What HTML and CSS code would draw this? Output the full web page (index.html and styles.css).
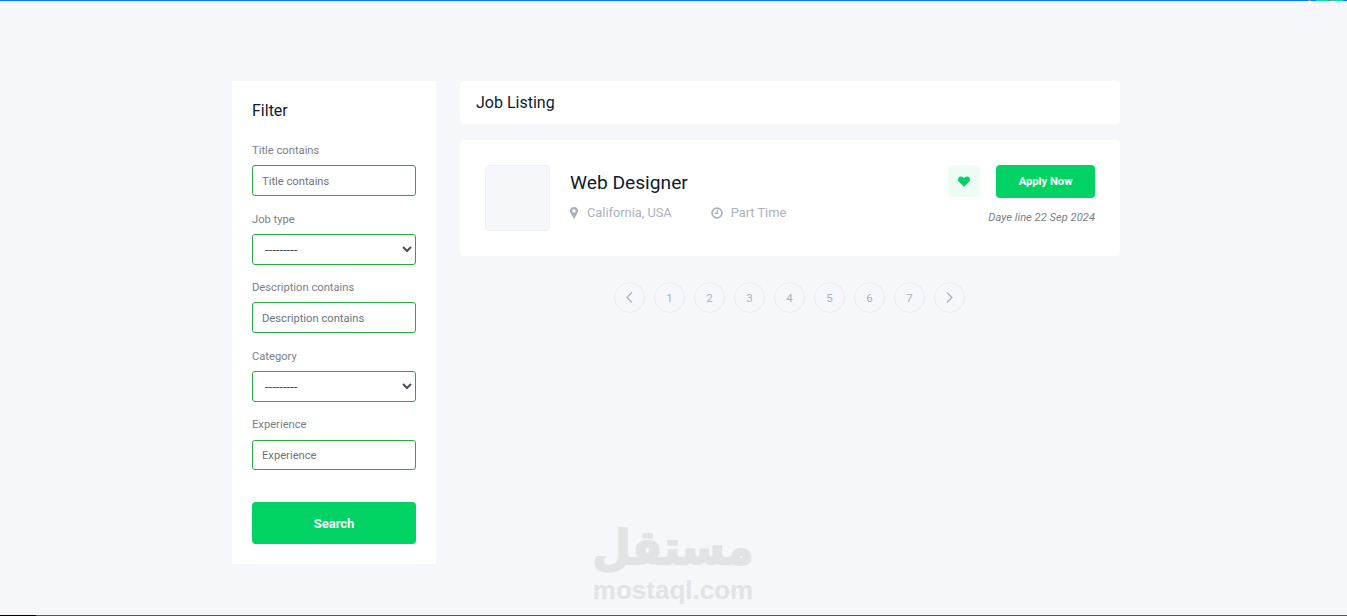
FILE: index.html
```html
<!DOCTYPE html>
<html lang="en">
<head>
<meta charset="utf-8">
<title>Job Listing</title>
<link rel="stylesheet" href="styles.css">
</head>
<body>
<div class="page">
  <div class="topbar"><span class="seg-fill"></span><span class="seg-grey s1"></span><span class="seg-blue s2"></span><span class="seg-teal s3"></span><span class="seg-blue s4"></span><span class="seg-grey s5"></span><span class="seg-teal s6"></span><span class="seg-blue s7"></span></div>
  <main class="layout">
    <aside class="filter">
      <h2 class="filter-title">Filter</h2>
      <form class="filter-form">
        <div class="field">
          <label class="field-label">Title contains</label>
          <input class="control" type="text" placeholder="Title contains">
        </div>
        <div class="field">
          <label class="field-label">Job type</label>
          <select class="control control-select"><option>---------</option></select>
        </div>
        <div class="field">
          <label class="field-label">Description contains</label>
          <input class="control" type="text" placeholder="Description contains">
        </div>
        <div class="field">
          <label class="field-label">Category</label>
          <select class="control control-select"><option>---------</option></select>
        </div>
        <div class="field">
          <label class="field-label">Experience</label>
          <input class="control" type="text" placeholder="Experience">
        </div>
        <button class="search-btn" type="button">Search</button>
      </form>
    </aside>
    <section class="content">
      <header class="list-head">Job Listing</header>
      <article class="job">
        <div class="job-logo"></div>
        <div class="job-info">
          <h3 class="job-title">Web Designer</h3>
          <div class="job-meta">
            <span class="meta-item meta-place">
              <svg class="meta-icon" width="8" height="12" viewBox="0 0 8 12"><path fill-rule="evenodd" fill="#a9b1bd" d="M4 0a4 4 0 0 1 4 4c0 1.100-.3 1.700-.7 2.500L4 12 .7 6.500C.3 5.700 0 5.100 0 4a4 4 0 0 1 4-4zm0 2.300a1.700 1.700 0 1 0 0 3.400 1.700 1.700 0 0 0 0-3.400z"/></svg>
              California, USA
            </span>
            <span class="meta-item">
              <svg class="meta-icon" width="12" height="12" viewBox="0 0 12 12"><circle cx="6" cy="6" r="4.900" fill="none" stroke="#a9b1bd" stroke-width="1.800"/><path d="M6.300 3v3.300H3.600" fill="none" stroke="#a9b1bd" stroke-width="1.300"/></svg>
              Part Time
            </span>
          </div>
        </div>
        <div class="job-side">
          <div class="job-actions">
            <button class="fav-btn" type="button" aria-label="Favourite">
              <svg width="12" height="11" viewBox="0 0 12 11"><path fill="#00d363" d="M6 10.800.9 5.800C-.3 4.600-.3 2.500.9 1.300c1.200-1.200 3-1.200 4.200 0l.9.900.9-.9c1.200-1.200 3-1.200 4.200 0 1.200 1.200 1.200 3.300 0 4.500z"/></svg>
            </button>
            <a class="apply-btn">Apply Now</a>
          </div>
          <p class="deadline">Daye line 22 Sep 2024</p>
        </div>
      </article>
      <nav class="pager">
        <a class="page-link"><svg width="7" height="11" viewBox="0 0 7 11"><path d="M6 .5 1 5.500l5 5" fill="none" stroke="#a9b1bd" stroke-width="1.200"/></svg></a>
        <a class="page-link">1</a>
        <a class="page-link">2</a>
        <a class="page-link">3</a>
        <a class="page-link">4</a>
        <a class="page-link">5</a>
        <a class="page-link">6</a>
        <a class="page-link">7</a>
        <a class="page-link"><svg width="7" height="11" viewBox="0 0 7 11"><path d="M1 .5l5 5-5 5" fill="none" stroke="#a9b1bd" stroke-width="1.200"/></svg></a>
      </nav>
    </section>
  </main>
  <div class="bottombar"><span class="seg-black"></span><span class="seg-dark"></span></div>
</div>
<div class="watermark">
  <div class="wm-ar" lang="ar" dir="rtl">مستقل</div>
  <div class="wm-en">mostaql.com</div>
</div>
</body>
</html>
```
FILE: styles.css
```css
* { box-sizing: border-box; }
html, body { margin: 0; height: 100%; overflow: hidden; }
body {
  background: #f5f7fb;
  font-family: Roboto, "Liberation Sans", sans-serif;
  color: #0e1a2e;
}
.page { display: flex; flex-direction: column; height: 100vh; }

.topbar { display: flex; height: 1px; flex: none; }
.seg-fill { flex: 1; background: #007bff; }
.seg-blue { background: #007bff; }
.seg-grey { background: #6f9fc4; }
.seg-teal { background: #10d8b0; }
.s1 { width: 3px; }
.s2 { width: 5px; }
.s3 { width: 13px; }
.s4 { width: 1px; }
.s5 { width: 4px; }
.s6 { width: 9px; }
.s7 { width: 4px; }

.bottombar { display: flex; height: 1px; flex: none; }
.seg-black { width: 36px; background: #000; }
.seg-dark { flex: 1; background: #555; }

.layout {
  flex: 1;
  display: flex;
  align-items: flex-start;
  gap: 24px;
  padding: 80px 227px 0 232px;
  min-height: 0;
}

.filter {
  width: 204px;
  flex: none;
  background: #fff;
  padding: 20px;
}
.filter-title {
  margin: 0 0 23px;
  font-size: 16px;
  line-height: 19px;
  font-weight: 400;
}
.field { margin-bottom: 15.6px; }
.field:nth-of-type(5) { margin-bottom: 31.6px; }
.field-label {
  display: block;
  font-size: 11.2px;
  line-height: 16px;
  margin-bottom: 6.2px;
  color: #7b7f87;
}
.control {
  display: block;
  width: 100%;
  height: 30.8px;
  padding: 1px 9px 0;
  border: 1px solid #28a745;
  border-radius: 3px;
  background: #fff;
  font-family: inherit;
  font-size: 11.2px;
  color: #495057;
  outline: none;
}
.control::placeholder { color: #6c757d; opacity: 1; }
.control-select { padding: 0 8px; color: #495057; font-size: 13px; }
.search-btn {
  display: block;
  width: 100%;
  height: 42px;
  padding: 2px 0 0;
  border: 0;
  border-radius: 4px;
  background: #00d363;
  color: #fff;
  font-family: inherit;
  font-size: 13px;
  font-weight: 700;
}

.content { width: 660px; flex: none; }
.list-head {
  height: 43px;
  padding: 0 16px;
  display: flex;
  align-items: center;
  background: #fff;
  border-radius: 4px;
  font-size: 16px;
  margin-bottom: 16px;
}
.job {
  display: flex;
  align-items: flex-start;
  height: 116px;
  padding: 25px;
  background: #fff;
  border-radius: 4px;
}
.job-logo {
  width: 65px;
  height: 66px;
  flex: none;
  background: #f5f7fb;
  border: 1px solid #eef0f4;
  border-radius: 4px;
}
.job-info { flex: 1; padding: 5px 0 0 20px; }
.job-title {
  margin: 0 0 8px;
  font-size: 19.2px;
  line-height: 26px;
  font-weight: 400;
}
.job-meta {
  display: flex;
  gap: 39px;
  font-size: 12.8px;
  line-height: 18px;
  color: #a9b1bd;
}
.meta-item { display: flex; align-items: center; }
.meta-icon { margin-right: 8px; }
.meta-place .meta-icon { margin-right: 9px; }
.job-side { display: flex; flex-direction: column; align-items: flex-end; }
.job-actions { display: flex; align-items: flex-start; gap: 16px; }
.fav-btn {
  width: 32px;
  height: 32px;
  padding: 0;
  border: 0;
  border-radius: 4px;
  background: #edfdf3;
  display: flex;
  align-items: center;
  justify-content: center;
}
.apply-btn {
  width: 99px;
  height: 33px;
  display: flex;
  align-items: center;
  justify-content: center;
  border-radius: 4px;
  background: #00d363;
  color: #fff;
  font-size: 11.2px;
  font-weight: 700;
}
.deadline {
  margin: 12.500px 0 0;
  font-size: 11.2px;
  line-height: 14px;
  font-style: italic;
  color: #7b7f87;
}

.pager {
  display: flex;
  justify-content: center;
  gap: 9px;
  margin-top: 26px;
  padding-right: 1px;
}
.page-link {
  width: 31px;
  height: 31px;
  display: flex;
  align-items: center;
  justify-content: center;
  border: 1px solid #e9ebef;
  border-radius: 50%;
  font-size: 11.500px;
  color: #a9b1bd;
}

.watermark {
  position: absolute;
  left: 573px;
  top: 518px;
  width: 200px;
  text-align: center;
  color: #e2e3e5;
  font-weight: 700;
}
.wm-ar {
  font-family: "DejaVu Sans", sans-serif;
  font-size: 44px;
  line-height: 58px;
  -webkit-text-stroke: 1.800px #e2e3e5;
  transform: translateY(1px) scaleY(1.080);
}
.wm-en {
  font-family: "Liberation Sans", sans-serif;
  font-size: 26px;
  line-height: 28px;
}
```
